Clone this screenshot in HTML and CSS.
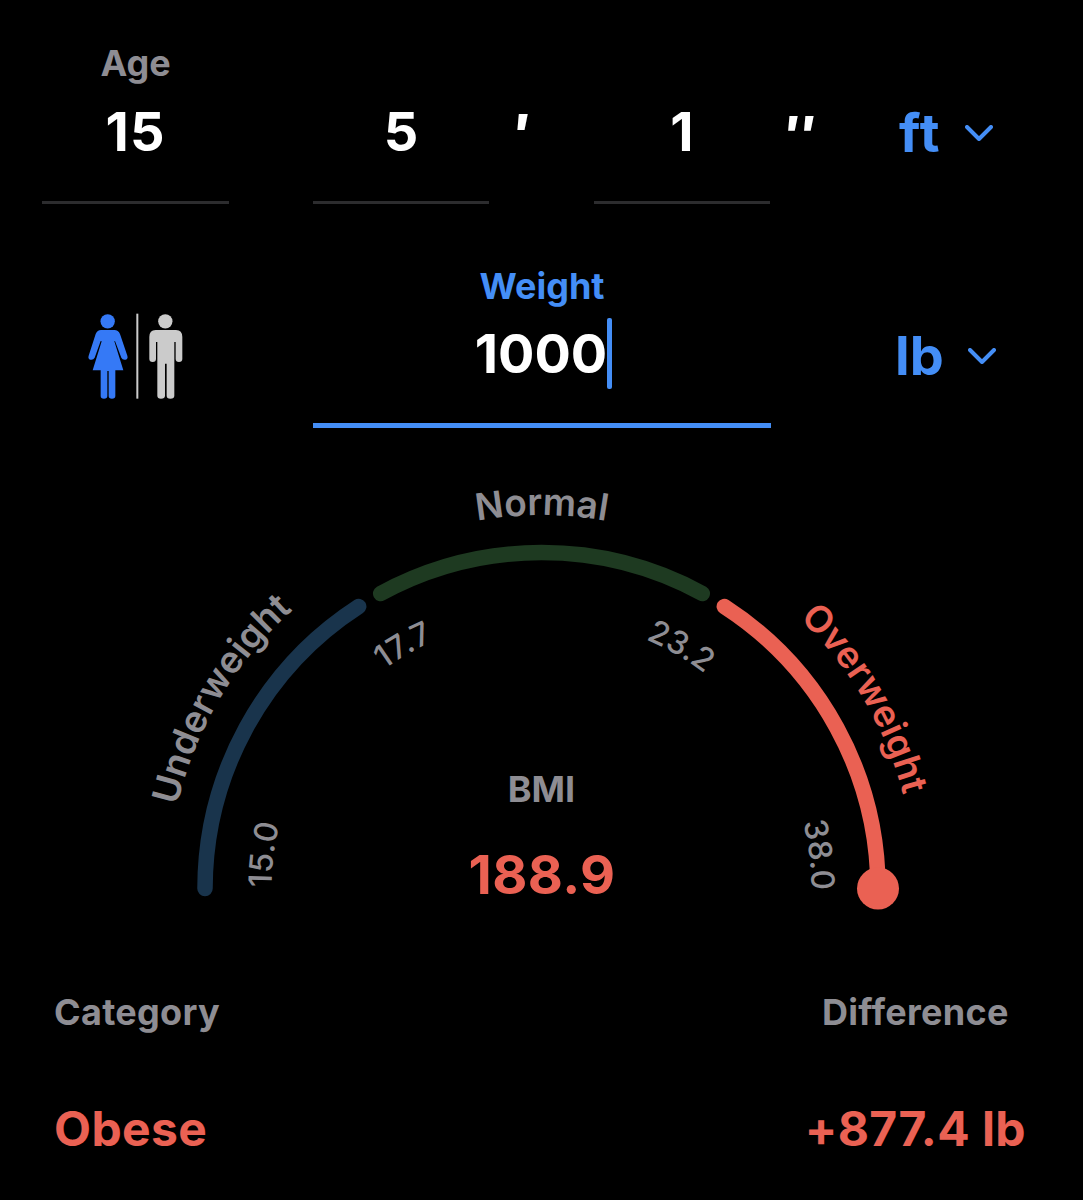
FILE: index.html
```html
<!DOCTYPE html>
<html lang="en">
<head>
  <meta charset="UTF-8" />
  <meta name="viewport" content="width=device-width, initial-scale=1.0"/>
  <title>BMI Calculator</title>
  <link rel="stylesheet" href="styles.css">
</head>
<body>

<!-- Age and height -->
<div class="row">
  <div class="field age">
    <span class="label">Age</span>
    <span class="value">15</span>
  </div>
  <div class="field feet">
    <span class="label"></span>
    <span class="value">5</span>
  </div>
  <span class="mark mark-feet">′</span>
  <div class="field inches">
    <span class="label"></span>
    <span class="value">1</span>
  </div>
  <span class="mark mark-inches">″</span>
  <div class="unit">
    <span class="ft">ft</span>
    <svg class="chevron" viewBox="0 0 28 16"><path d="M2 2 L14 14 L26 2"/></svg>
  </div>
</div>

<!-- Gender and weight -->
<div class="row row-weight">
  <div class="gender">
    <svg viewBox="50 40 290 260">
      <g class="female">
        <circle cx="112" cy="65" r="21.5"/>
        <path d="M92 91 H132 Q144 91 149 103 L171 168 Q174 177 166 180 Q157 182 153 174 L134 124 L132 125 L159 212 H135 V289 Q135 297 125 297 Q115 297 115 289 V214 H111 V289 Q111 297 101 297 Q91 297 91 289 V212 H67 L94 125 L91 124 L73 174 Q69 182 60 180 Q52 177 55 168 L76 103 Q81 91 92 91 Z"/>
      </g>
      <rect class="divider" x="198" y="42" width="6" height="255"/>
      <g class="male">
        <circle cx="285" cy="65" r="21.5"/>
        <path d="M256 91 H317 Q336 91 336 112 V178 Q336 187 326 187 Q316 187 316 178 V127 H312 V288 Q312 297 300 297 Q289 297 289 288 V192 H284 V288 Q284 297 272 297 Q261 297 261 288 V127 H257 V178 Q257 187 247 187 Q237 187 237 178 V112 Q237 91 256 91 Z"/>
      </g>
    </svg>
  </div>
  <div class="field weight active">
    <span class="label">Weight</span>
    <span class="value">1000<i class="caret"></i></span>
  </div>
  <div class="unit">
    <span>lb</span>
    <svg class="chevron" viewBox="0 0 28 16"><path d="M2 2 L14 14 L26 2"/></svg>
  </div>
</div>

<!-- BMI gauge -->
<svg class="gauge" viewBox="0 460 1083 470">
  <defs>
    <path id="outer" d="M168 888.5 A373.5 373.5 0 0 1 915 888.5"/>
    <path id="inner" d="M271.5 888.5 A270 270 0 0 1 811.5 888.5 V910"/>
  </defs>

  <path class="arc under" d="M205 888.5 A336.5 336.5 0 0 1 358.7 606.5"/>
  <path class="arc normal" d="M380.7 593.5 A336.5 336.5 0 0 1 702.3 593.5"/>
  <path class="arc over" d="M724.3 606.5 A336.5 336.5 0 0 1 878 888.5"/>
  <circle class="knob" cx="878" cy="888.5" r="21"/>

  <text class="zone"><textPath href="#outer" startOffset="199">Underweight</textPath></text>
  <text class="zone"><textPath href="#outer" startOffset="586.5">Normal</textPath></text>
  <text class="zone current"><textPath href="#outer" startOffset="974.5">Overweight</textPath></text>

  <text class="tick wide"><textPath href="#inner" startOffset="33.5">15.0</textPath></text>
  <text class="tick wide"><textPath href="#inner" startOffset="284.5">17.7</textPath></text>
  <text class="tick"><textPath href="#inner" startOffset="565">23.2</textPath></text>
  <text class="tick"><textPath href="#inner" startOffset="815">38.0</textPath></text>

  <text class="bmi-label" x="541.5" y="802">BMI</text>
  <text class="bmi-value" x="542" y="894">188.9</text>
</svg>

<!-- Result -->
<div class="result">
  <div class="stat category">
    <span class="label">Category</span>
    <span class="stat-value">Obese</span>
  </div>
  <div class="stat difference">
    <span class="label">Difference</span>
    <span class="stat-value">+877.4 lb</span>
  </div>
</div>

</body>
</html>
```
FILE: styles.css
```css
body {
  margin: 0;
  height: 1200px;
  overflow: hidden;
  background-color: #000;
  color: #fff;
  font-family: Inter, "Liberation Sans", sans-serif;
  font-weight: 700;
}

/* Input rows */
.row {
  display: flex;
  align-items: flex-start;
  padding: 41px 0 0 42px;
}

.row-weight {
  padding-top: 60px;
}

.label {
  height: 44px;
  line-height: 44px;
  font-size: 36px;
  font-weight: 650;
  color: #8e8d93;
}

.value {
  display: flex;
  margin-top: 14px;
  line-height: 66px;
  font-size: 54px;
}

.age .value {
  letter-spacing: 1px;
}

.field {
  display: flex;
  flex-direction: column;
  align-items: center;
  padding-bottom: 36px;
  border-bottom: 3px solid #2c2c2e;
}

.age {
  width: 187px;
  margin-right: 84px;
}

.feet,
.inches {
  width: 176px;
}

.weight {
  width: 458px;
}

.active {
  padding-bottom: 35px;
  border-bottom: 5px solid #448ef6;
}

.active .label {
  color: #448ef6;
}

.active .value {
  margin-top: 13px;
  margin-bottom: 1px;
}

.caret {
  width: 5px;
  height: 71px;
  margin: -3px -3px -5px 0;
  border-radius: 2px;
  background-color: #448ef6;
}

.mark {
  box-sizing: border-box;
  margin-top: 60px;
  line-height: 66px;
  font-size: 54px;
  font-weight: 900;
}

.mark-feet {
  width: 105px;
  padding-left: 25px;
}

.mark-inches {
  width: 129px;
  padding-left: 15px;
  font-size: 50px;
}

.unit {
  display: flex;
  align-items: center;
  gap: 24px;
  margin-top: 59px;
  line-height: 66px;
  font-size: 54px;
  color: #448ef6;
}

.ft {
  letter-spacing: 1.5px;
}

.row-weight .unit {
  margin-left: 124px;
}

.chevron {
  width: 28px;
  height: 16px;
  fill: none;
  stroke: #448ef6;
  stroke-width: 4;
  stroke-linecap: round;
  stroke-linejoin: round;
}

/* Gender switch */
.gender {
  width: 226px;
  padding: 49px 0 0 45px;
  box-sizing: border-box;
  margin-right: 45px;
}

.gender svg {
  display: block;
  width: 96.67px;
  height: 86.67px;
}

.female {
  fill: #3579f6;
}

.male,
.divider {
  fill: #cbcbcb;
}

/* Gauge */
.gauge {
  display: block;
  width: 1083px;
  height: 470px;
  margin-top: 32px;
}

.arc {
  fill: none;
  stroke-width: 15.5;
  stroke-linecap: round;
}

.under {
  stroke: #19344c;
}

.normal {
  stroke: #1e3a21;
}

.over {
  stroke: #ea6153;
}

.zone,
.tick,
.bmi-label {
  fill: #8e8d93;
  text-anchor: middle;
}

.zone {
  font-size: 37px;
  font-weight: 600;
}

.tick {
  font-size: 32px;
  font-weight: 550;
}

.wide {
  letter-spacing: 0.8px;
}

.bmi-label {
  font-size: 36px;
  font-weight: 650;
}

.bmi-value {
  font-size: 54px;
  letter-spacing: 0.4px;
  text-anchor: middle;
}

.knob,
.zone.current,
.bmi-value {
  fill: #ea6153;
}

/* Result */
.result {
  display: flex;
  justify-content: space-between;
  padding: 60px 57px 0 54px;
}

.result .label {
  letter-spacing: 0.3px;
}

.stat {
  display: flex;
  flex-direction: column;
}

.difference {
  align-items: center;
}

.stat-value {
  margin-top: 66px;
  line-height: 58px;
  font-size: 48px;
  letter-spacing: 0.4px;
  color: #ea6153;
}
```
